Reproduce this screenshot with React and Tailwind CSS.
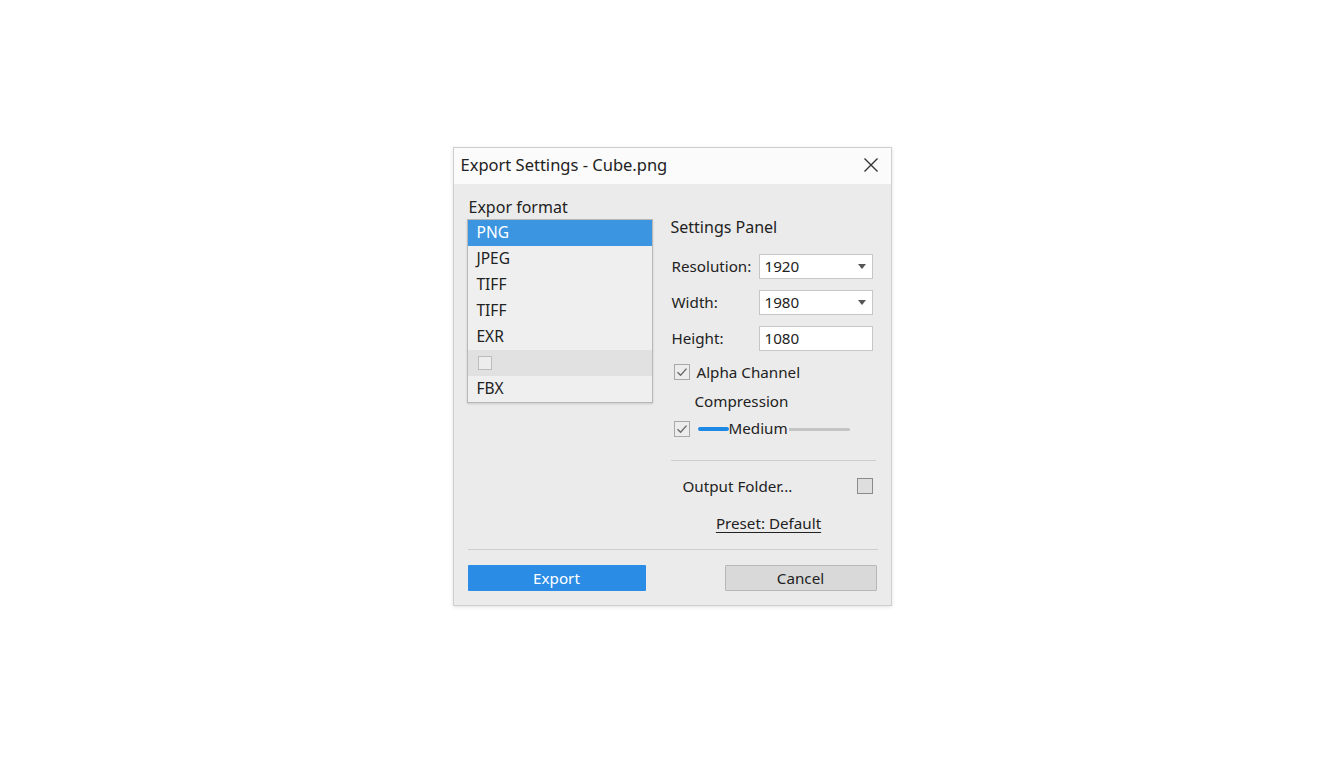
import React, { useState } from 'react';

const FORMATS = ['PNG', 'JPEG', 'TIFF', 'TIFF', 'EXR', null, 'FBX'];

function Check({ checked }) {
  return (
    <span className="w-[16px] h-[16px] border border-[#a8a8a8] bg-[#ececec] flex items-center justify-center">
      {checked && (
        <svg width="12" height="12" viewBox="0 0 12 12">
          <path d="M1.5 6.2 L4.6 9.2 L10.5 2.6" fill="none" stroke="#6b6b6b" strokeWidth="1.4" />
        </svg>
      )}
    </span>
  );
}

function Field({ label, value, dropdown }) {
  return (
    <div className="flex items-center h-[25px]">
      <span className="w-[88px] pl-[1px]">{label}</span>
      <div className="w-[114px] h-[25px] bg-white border border-[#c6c6c6] flex items-center pl-[5px] pr-[6px]">
        <span className="flex-1">{value}</span>
        {dropdown && (
          <svg width="8" height="5" viewBox="0 0 8 5">
            <path d="M0 0 H8 L4 5 Z" fill="#555" />
          </svg>
        )}
      </div>
    </div>
  );
}

export default function App() {
  const [selected, setSelected] = useState(0);

  return (
    <div
      className="w-full h-screen bg-white flex justify-center items-start pt-[147px] text-[#222]"
      style={{ fontFamily: '"Noto Sans", "Open Sans", sans-serif' }}
    >
      <div className="w-[439px] h-[459px] border border-[#cfcfcf] bg-[#ebebeb] shadow-[0_1px_4px_rgba(0,0,0,0.12)] flex flex-col">
        {/* title bar */}
        <div className="h-[36px] bg-[#fbfbfb] flex items-center pl-[7px] pr-[12px] pb-[2px]">
          <span className="flex-1 text-[16.5px]">Export Settings - Cube.png</span>
          <svg width="16" height="16" viewBox="0 0 16 16">
            <path d="M1.5 1.5 L14.5 14.5 M14.5 1.5 L1.5 14.5" stroke="#333" strokeWidth="1.4" />
          </svg>
        </div>

        <div className="flex-1 flex flex-col px-[13px] text-[15.2px]">
          <div className="flex h-[365px]">
            {/* format list */}
            <div className="w-[186px] pt-[12px]">
              <div className="text-[16px] leading-[23px] pl-[2px]">Expor format</div>
              <div className="border border-[#b8b8b8] bg-[#efefef] shadow-[0_1px_2px_rgba(0,0,0,0.15)]">
                {FORMATS.map((f, i) => (
                  <div
                    key={i}
                    onClick={() => setSelected(i)}
                    className={`h-[26px] flex items-center pl-[9px] text-[15.5px] ${
                      i === selected ? 'bg-[#3c95e1] text-white' : f === null ? 'bg-[#e1e1e1]' : ''
                    }`}
                  >
                    {f === null ? (
                      <span className="w-[14px] h-[14px] border border-[#bdbdbd] bg-[#ededed] ml-[1px]" />
                    ) : (
                      f
                    )}
                  </div>
                ))}
              </div>
            </div>

            {/* settings panel */}
            <div className="flex-1 pl-[18px] pt-[32px]">
              <div className="text-[16px] leading-[22px]">Settings Panel</div>
              <div className="mt-[16px] flex flex-col gap-[11px]">
                <Field label="Resolution:" value="1920" dropdown />
                <Field label="Width:" value="1980" dropdown />
                <Field label="Height:" value="1080" />
              </div>
              <div className="mt-[12px] flex items-center h-[18px] pl-[3px]">
                <Check checked />
                <span className="ml-[7px]">Alpha Channel</span>
              </div>
              <div className="mt-[11px] h-[18px] pl-[24px] flex items-center">Compression</div>
              <div className="mt-[10px] flex items-center h-[18px] pl-[3px]">
                <Check checked />
                <div className="relative ml-[8px] w-[152px] h-[18px] flex items-center">
                  <div className="w-[31px] h-[4px] bg-[#1e88e5] rounded-full" />
                  <div className="flex-1 h-[3px] bg-[#c4c4c4] rounded-full" />
                  <span className="absolute left-[31px] top-[-3px] bg-[#ebebeb] pr-[1px]">Medium</span>
                </div>
              </div>
              <div className="mt-[22px] h-px bg-[#cdcdcd] mr-[2px]" />
              <div className="mt-[15px] flex items-center h-[20px] pl-[12px] pr-[5px]">
                <span className="flex-1">Output Folder...</span>
                <span className="w-[16px] h-[16px] border border-[#8a8a8a] bg-[#dedede]" />
              </div>
              <div className="mt-[16px] text-center underline underline-offset-[3px] pr-[11px]">Preset: Default</div>
            </div>
          </div>

          <div className="h-px bg-[#cdcdcd] ml-[1px]" />

          <div className="mt-[15px] flex justify-between pl-[1px] pr-[1px]">
            <button className="w-[178px] h-[26px] bg-[#2b8ce6] text-white rounded-[1px]">Export</button>
            <button className="w-[152px] h-[26px] bg-[#d9d9d9] border border-[#b7b7b7] rounded-[1px]">Cancel</button>
          </div>
        </div>
      </div>
    </div>
  );
}
